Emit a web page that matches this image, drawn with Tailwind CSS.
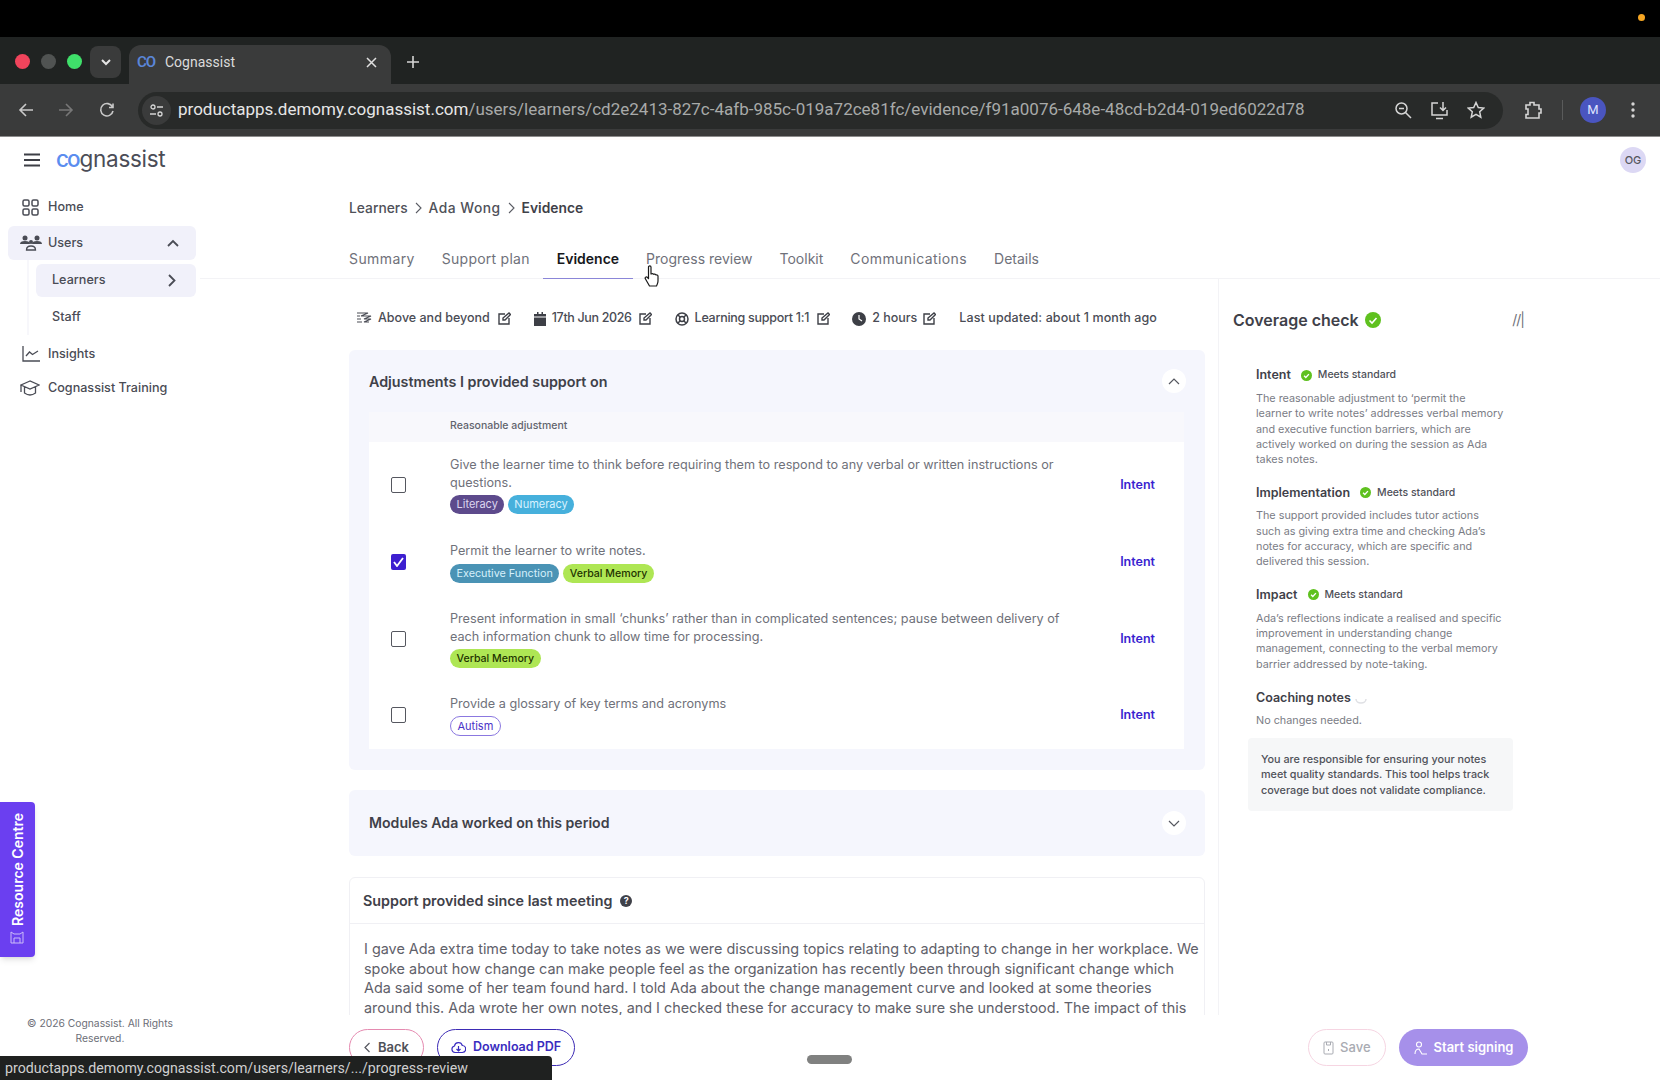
<!DOCTYPE html>
<html lang="en">
<head>
  <meta charset="UTF-8" />
  <title>Cognassist</title>
  <script src="https://cdn.jsdelivr.net/npm/@tailwindcss/browser@4"></script>
</head>
<body class="bg-white font-['Inter',sans-serif]">
<div class="relative w-[1660px] h-[1080px] overflow-hidden flex flex-col bg-white">

  <!-- mac menu bar -->
  <div class="h-[37px] bg-black flex items-center justify-end pr-[15px] pb-[2px] shrink-0">
    <span class="w-[7px] h-[7px] rounded-full bg-[#f5a623]"></span>
  </div>

  <!-- chrome tab strip -->
  <div class="h-[47px] bg-[#202322] flex items-end shrink-0 font-['Roboto',sans-serif]">
    <div class="flex items-center self-center gap-[11px] pl-[15px] mt-[1px]">
      <span class="w-[15px] h-[15px] rounded-full bg-[#f0445c]"></span>
      <span class="w-[15px] h-[15px] rounded-full bg-[#505352]"></span>
      <span class="w-[15px] h-[15px] rounded-full bg-[#3fe06a]"></span>
    </div>
    <div class="ml-[8px] mb-[6px] w-[31px] h-[32px] rounded-lg bg-[#3a3b3b] flex items-center justify-center">
      <svg class="w-[12px] h-[12px]" viewBox="0 0 12 12" fill="none" stroke="#e5e5e5" stroke-width="2"><path d="M2 4l4 4 4-4"/></svg>
    </div>
    <div class="ml-[8px] w-[262px] h-[39px] bg-[#3a3b3b] rounded-t-xl flex items-center pl-[8px] pr-[14px] pb-[5px]">
      <span class="text-[#5b86d8] font-semibold text-[15px] tracking-[-1px] w-[28px]">CO</span>
      <span class="text-[#dcdcdc] text-[14px]">Cognassist</span>
      <svg class="ml-auto w-[11px] h-[11px]" viewBox="0 0 11 11" fill="none" stroke="#e0e0e0" stroke-width="1.5"><path d="M1 1l9 9M10 1l-9 9"/></svg>
    </div>
    <svg class="ml-[15px] mb-[15px] w-[14px] h-[14px]" viewBox="0 0 14 14" fill="none" stroke="#d5d5d5" stroke-width="1.6"><path d="M7 1v12M1 7h12"/></svg>
  </div>

  <!-- chrome toolbar -->
  <div class="h-[53px] bg-[#3a3b3b] border-b border-[#8c8c8c] flex items-center shrink-0 font-['Roboto',sans-serif]">
    <svg class="ml-[18px] w-[16px] h-[16px]" viewBox="0 0 16 16" fill="none" stroke="#c9c9c9" stroke-width="1.6"><path d="M15 8H2M8 2L2 8l6 6"/></svg>
    <svg class="ml-[24px] w-[16px] h-[16px]" viewBox="0 0 16 16" fill="none" stroke="#777" stroke-width="1.6"><path d="M1 8h13M8 2l6 6-6 6"/></svg>
    <svg class="ml-[25px] w-[16px] h-[16px]" viewBox="0 0 16 16" fill="none" stroke="#c9c9c9" stroke-width="1.6"><path d="M13.5 5A6.2 6.2 0 1 0 14 9M14 1.5V5.5H10"/></svg>
    <div class="ml-[23px] w-[1365px] h-[37px] rounded-full bg-[#282a29] flex items-center pl-[4px] pr-[18px]">
      <span class="w-[29px] h-[29px] rounded-full bg-[#3a3b3b] flex items-center justify-center shrink-0">
        <svg class="w-[15px] h-[15px]" viewBox="0 0 15 15" fill="none" stroke="#d5d5d5" stroke-width="1.3"><circle cx="4" cy="4" r="2"/><path d="M8 4h6M1 11h6"/><circle cx="11" cy="11" r="2"/></svg>
      </span>
      <span class="ml-[7px] text-[17px] text-[#a8aaa9] whitespace-nowrap"><span class="text-[#e6e6e6]">productapps.demomy.cognassist.com</span>/users/learners/cd2e2413-827c-4afb-985c-019a72ce81fc/evidence/f91a0076-648e-48cd-b2d4-019ed6022d78</span>
      <svg class="ml-auto w-[18px] h-[18px]" viewBox="0 0 18 18" fill="none" stroke="#d5d5d5" stroke-width="1.5"><circle cx="7.5" cy="7.5" r="5.5"/><path d="M5 7.5h5M11.5 11.5L17 17"/></svg>
      <svg class="ml-[18px] w-[19px] h-[19px]" viewBox="0 0 19 19" fill="none" stroke="#d5d5d5" stroke-width="1.5"><path d="M8 2H2v12h15V9M6 17.5h7M13 1v8M10 6.5l3 3 3-3"/></svg>
      <svg class="ml-[18px] w-[18px] h-[18px]" viewBox="0 0 18 18" fill="none" stroke="#d5d5d5" stroke-width="1.5"><path d="M9 1.5l2.3 5 5.4.6-4 3.7 1.1 5.4L9 13.4l-4.8 2.8 1.1-5.4-4-3.7 5.4-.6z"/></svg>
    </div>
    <svg class="ml-[20px] w-[20px] h-[20px]" viewBox="0 0 20 20" fill="none" stroke="#d5d5d5" stroke-width="1.6"><path d="M3 5h4V2.5h4V5h5v4h2v4h-2v5H3v-3.500h2V9H3z"/></svg>
    <span class="ml-[19px] w-px h-[20px] bg-[#5a5b5b]"></span>
    <span class="ml-[17px] w-[26px] h-[26px] rounded-full bg-[#4a55c0] text-[#dfe2ff] text-[13px] flex items-center justify-center">M</span>
    <svg class="ml-[25px] w-[4px] h-[16px]" viewBox="0 0 4 16" fill="#d5d5d5"><circle cx="2" cy="2" r="1.700"/><circle cx="2" cy="8" r="1.700"/><circle cx="2" cy="14" r="1.700"/></svg>
  </div>

  <!-- app -->
  <div class="flex-1 flex min-h-0">

    <!-- sidebar -->
    <aside class="w-[200px] shrink-0 flex flex-col text-[#4a4c55] text-[12.600px] font-medium">
      <div class="h-[46px] flex items-center pl-[24px]">
        <svg class="w-[16px] h-[14px]" viewBox="0 0 16 14" fill="none" stroke="#3d3f46" stroke-width="2"><path d="M0 1.500h16M0 7h16M0 12.500h16"/></svg>
        <span class="ml-[16px] text-[22.500px] leading-none font-normal tracking-[-0.3px] text-[#4b4d57] -mt-[1px]"><span class="text-[#5b8def] font-medium tracking-[-2px] mr-[1px]">co</span>gnassist</span>
      </div>
      <div class="h-[43px] flex items-center pl-[22px] pt-[5px] gap-[9px]">
        <svg class="w-[17px] h-[17px]" viewBox="0 0 17 17" fill="none" stroke="#4a4c55" stroke-width="1.500"><rect x="1" y="1" width="6" height="6" rx="1.500"/><rect x="10" y="1" width="6" height="6" rx="1.500"/><rect x="1" y="10" width="6" height="6" rx="1.500"/><rect x="10" y="10" width="6" height="6" rx="1.500"/></svg>
        Home
      </div>
      <div class="ml-[8px] w-[188px] h-[34px] rounded-md bg-[#f1f1fa] flex items-center pl-[12px] pr-[17px] gap-[6px]">
        <svg class="w-[22px] h-[16px]" viewBox="0 0 22 16" fill="#4a4c55"><circle cx="5" cy="3" r="2.500"/><circle cx="17" cy="3" r="2.500"/><path d="M0 9q0-3 5-3t5 3zM12 9q0-3 5-3t5 3z"/><circle cx="11" cy="7" r="2"/><path d="M6.500 15q0-4 4.500-4t4.500 4z" fill="none" stroke="#4a4c55" stroke-width="1.300"/></svg>
        Users
        <svg class="ml-auto w-[12px] h-[8px]" viewBox="0 0 12 8" fill="none" stroke="#4a4c55" stroke-width="1.800"><path d="M1 7l5-5 5 5"/></svg>
      </div>
      <div class="ml-[27px] border-l-2 border-[#f7f7fb]">
        <div class="ml-[7px] mt-[4px] w-[160px] h-[33px] rounded-md bg-[#f1f1fa] flex items-center pl-[16px] pr-[20px]">
          Learners
          <svg class="ml-auto w-[8px] h-[13px]" viewBox="0 0 8 13" fill="none" stroke="#4a4c55" stroke-width="1.800"><path d="M1 1l5.500 5.500L1 12"/></svg>
        </div>
        <div class="ml-[23px] h-[38px] pt-[3px] flex items-center">Staff</div>
      </div>
      <div class="h-[37px] flex items-center pl-[22px] pt-[1px] gap-[8px]">
        <svg class="w-[18px] h-[16px]" viewBox="0 0 18 16" fill="none" stroke="#4a4c55" stroke-width="1.300"><path d="M1 0v15h17M4 10l3.500-4 3 2.500L16 5"/></svg>
        Insights
      </div>
      <div class="h-[33px] flex items-center pl-[20px] gap-[8px]">
        <svg class="w-[20px] h-[17px]" viewBox="0 0 20 17" fill="none" stroke="#4a4c55" stroke-width="1.300"><path d="M10 1L1 5l9 4 9-4zM4.500 7v6q5.500 4 11 0V7M1 5v7"/></svg>
        Cognassist Training
      </div>
      <div class="mt-auto mb-[34px] text-[10.300px] leading-[15px] font-normal text-[#6c6e77] text-center px-[20px]">© 2026 Cognassist. All Rights Reserved.</div>
    </aside>

    <!-- main -->
    <main class="flex-1 min-w-0 flex flex-col relative">
      <div class="pl-[149px] pt-[61px] flex items-center gap-[7px] text-[13.800px] font-medium text-[#4f5159] leading-[20px]">
        Learners
        <svg class="w-[7px] h-[12px]" viewBox="0 0 7 12" fill="none" stroke="#5a5c64" stroke-width="1.100"><path d="M1 1l5 5-5 5"/></svg>
        <span class="tracking-[0.500px]">Ada Wong</span>
        <svg class="w-[7px] h-[12px]" viewBox="0 0 7 12" fill="none" stroke="#5a5c64" stroke-width="1.100"><path d="M1 1l5 5-5 5"/></svg>
        <span class="font-semibold text-[#3f4149]">Evidence</span>
      </div>

      <div class="mt-[21px] pl-[135.500px] flex text-[14px] text-[#6f717a] border-b border-[#f3f3f6] h-[40px]">
        <span class="px-[13.500px] pt-[9px] tracking-[0.400px]">Summary</span>
        <span class="px-[13.500px] pt-[9px] tracking-[0.250px]">Support plan</span>
        <span class="px-[13.500px] pt-[9px] h-[40px] font-semibold text-[#17181c] border-b-[1.500px] border-[#8b86d8]">Evidence</span>
        <span class="px-[13.500px] pt-[9px]">Progress review</span>
        <span class="px-[13.500px] pt-[9px]">Toolkit</span>
        <span class="px-[13.500px] pt-[9px] tracking-[0.400px]">Communications</span>
        <span class="px-[13.500px] pt-[9px]">Details</span>
      </div>

      <div class="flex-1 min-h-0 flex">
        <!-- left column -->
        <div class="w-[1019px] shrink-0 overflow-hidden pl-[149px] pr-[13px] border-r border-[#f3f3f6]">
          <div class="h-[71px] flex items-center text-[12.500px] font-medium text-[#4a4c55] pl-[7px] pt-[8px]">
            <svg class="w-[16px] h-[15px]" viewBox="0 0 16 15" fill="none" stroke="#4a4c55" stroke-width="1.200"><path d="M1 2h11l-7 3h10L8 8h7l-7 3h5M1 5h3M1 8h4M1 11h5"/></svg>
            <span class="ml-[6px]">Above and beyond</span>
            <svg class="ml-[8px] w-[13px] h-[13px]" viewBox="0 0 13 13" fill="none" stroke="#3d3f46" stroke-width="1.400"><path d="M7 2H1v10h10V6M5 8V6l6-5 1.500 1.500L7 8z"/></svg>
            <svg class="ml-[23px] w-[12px] h-[14px]" viewBox="0 0 12 14" fill="#3d3f46"><path d="M3 0h1.500v2h3V0H9v2h3v2.500H0V2h3zM0 5.500h12V14H0z"/></svg>
            <span class="ml-[6px] tracking-[-0.350px]">17th Jun 2026</span>
            <svg class="ml-[7px] w-[13px] h-[13px]" viewBox="0 0 13 13" fill="none" stroke="#3d3f46" stroke-width="1.400"><path d="M7 2H1v10h10V6M5 8V6l6-5 1.500 1.500L7 8z"/></svg>
            <svg class="ml-[23px] w-[14px] h-[14px]" viewBox="0 0 14 14" fill="none" stroke="#3d3f46" stroke-width="1.500"><circle cx="7" cy="7" r="6"/><circle cx="7" cy="7" r="2.500"/><path d="M3 3l2 2M11 3L9 5M3 11l2-2M11 11L9 9"/></svg>
            <span class="ml-[6px] tracking-[-0.270px]">Learning support 1:1</span>
            <svg class="ml-[8px] w-[13px] h-[13px]" viewBox="0 0 13 13" fill="none" stroke="#3d3f46" stroke-width="1.400"><path d="M7 2H1v10h10V6M5 8V6l6-5 1.500 1.500L7 8z"/></svg>
            <svg class="ml-[22px] w-[14px] h-[14px]" viewBox="0 0 14 14"><circle cx="7" cy="7" r="7" fill="#3d3f46"/><path d="M7 3v4l3 2" fill="none" stroke="#fff" stroke-width="1.200"/></svg>
            <span class="ml-[6px]">2 hours</span>
            <svg class="ml-[6px] w-[13px] h-[13px]" viewBox="0 0 13 13" fill="none" stroke="#3d3f46" stroke-width="1.400"><path d="M7 2H1v10h10V6M5 8V6l6-5 1.500 1.500L7 8z"/></svg>
            <span class="ml-[23px] tracking-[0.100px]">Last updated: about 1 month ago</span>
          </div>

          <!-- adjustments panel -->
          <section class="bg-[#f5f6fd] rounded-md h-[420px] pl-[20px] pr-[21px]">
            <div class="h-[62px] flex items-center justify-between text-[14.300px] font-semibold text-[#3f4149] pt-[2px]">
              Adjustments I provided support on
              <span class="w-[24px] h-[24px] rounded-full bg-white flex items-center justify-center -mr-[2px] -mt-[2px]">
                <svg class="w-[12px] h-[7px]" viewBox="0 0 12 7" fill="none" stroke="#55575f" stroke-width="1.200"><path d="M1 6l5-5 5 5"/></svg>
              </span>
            </div>
            <div class="h-[30px] bg-[#f8f8fc] flex items-center pl-[81px] pb-[2px] text-[10.500px] font-medium text-[#62646d]">Reasonable adjustment</div>
            <div class="bg-white">
              <div class="h-[85px] flex items-center pl-[22px] pr-[29px]">
                <span class="w-[15px] h-[16px] rounded-[2px] border-[1.500px] border-[#55575f] shrink-0"></span>
                <div class="ml-[44px] w-[630px] text-[12.650px] leading-[18px] text-[#6f717a]">
                  <p class="whitespace-nowrap">Give the learner time to think before requiring them to respond to any verbal or written instructions or<br>questions.</p>
                  <div class="flex gap-[4px] mt-[3px]">
                    <span class="h-[19px] px-[6.500px] rounded-full bg-[#5d4a8c] text-[#dcd6f0] text-[11px] leading-[19px]">Literacy</span>
                    <span class="h-[19px] px-[6px] rounded-full bg-[#46b0dc] text-[#d9f2ff] text-[11px] leading-[19px]">Numeracy</span>
                  </div>
                </div>
                <span class="ml-auto mt-[2px] text-[12.500px] font-semibold text-[#3a1fd0]">Intent</span>
              </div>
              <div class="h-[70px] flex items-center pl-[22px] pr-[29px]">
                <span class="w-[15px] h-[16px] rounded-[2px] bg-[#3d1fd0] shrink-0 flex items-center justify-center">
                  <svg class="w-[11px] h-[10px]" viewBox="0 0 11 10" fill="none" stroke="#fff" stroke-width="1.800"><path d="M1 5l3 4 6-8"/></svg>
                </span>
                <div class="ml-[44px] text-[12.650px] leading-[18px] text-[#6f717a]">
                  <p>Permit the learner to write notes.</p>
                  <div class="flex gap-[4px] mt-[4px]">
                    <span class="h-[19px] px-[6.500px] rounded-full bg-[#4a93b5] text-[#d6f0fb] text-[10.800px] leading-[19px]">Executive Function</span>
                    <span class="h-[19px] px-[6.500px] rounded-full bg-[#aee654] text-[#1f3300] font-medium text-[10.600px] leading-[19px]">Verbal Memory</span>
                  </div>
                </div>
                <span class="ml-auto text-[12.500px] font-semibold text-[#3a1fd0]">Intent</span>
              </div>
              <div class="h-[84px] flex items-center pl-[22px] pr-[29px]">
                <span class="w-[15px] h-[16px] rounded-[2px] border-[1.500px] border-[#55575f] shrink-0"></span>
                <div class="ml-[44px] text-[12.650px] leading-[18px] text-[#6f717a]">
                  <p class="whitespace-nowrap">Present information in small ‘chunks’ rather than in complicated sentences; pause between delivery of<br>each information chunk to allow time for processing.</p>
                  <div class="flex gap-[4px] mt-[3px]">
                    <span class="h-[19px] px-[6.500px] rounded-full bg-[#aee654] text-[#1f3300] font-medium text-[10.600px] leading-[19px]">Verbal Memory</span>
                  </div>
                </div>
                <span class="ml-auto text-[12.500px] font-semibold text-[#3a1fd0]">Intent</span>
              </div>
              <div class="h-[68px] flex items-center pl-[22px] pr-[29px]">
                <span class="w-[15px] h-[16px] rounded-[2px] border-[1.500px] border-[#55575f] shrink-0"></span>
                <div class="ml-[44px] text-[12.650px] leading-[18px] text-[#6f717a]">
                  <p>Provide a glossary of key terms and acronyms</p>
                  <div class="flex gap-[4px] mt-[3px]">
                    <span class="h-[20px] px-[6.500px] rounded-full border border-[#8b78e0] bg-white text-[#4a32c8] text-[11px] leading-[18px]">Autism</span>
                  </div>
                </div>
                <span class="ml-auto text-[12.500px] font-semibold text-[#3a1fd0]">Intent</span>
              </div>
            </div>
          </section>

          <!-- modules panel -->
          <section class="mt-[20px] h-[66px] bg-[#f5f6fd] rounded-md pl-[20px] pr-[21px] flex items-center justify-between text-[14.100px] font-semibold text-[#3f4149]">
            Modules Ada worked on this period
            <span class="w-[24px] h-[24px] rounded-full bg-white flex items-center justify-center -mr-[2px]">
              <svg class="w-[12px] h-[7px]" viewBox="0 0 12 7" fill="none" stroke="#55575f" stroke-width="1.200"><path d="M1 1l5 5 5-5"/></svg>
            </span>
          </section>

          <!-- support card -->
          <section class="mt-[21px] border border-[#f0f0f4] rounded-t-md">
            <div class="h-[46px] flex items-center px-[13px] gap-[8px] border-b border-[#f0f0f4] text-[14.300px] font-semibold text-[#3f4149]">
              Support provided since last meeting
              <span class="w-[12px] h-[12px] rounded-full bg-[#3f4149] text-white text-[9px] font-bold flex items-center justify-center">?</span>
            </div>
            <p class="pl-[14px] pt-[15px] pb-[20px] text-[14.400px] leading-[19.500px] text-[#5f616a] whitespace-nowrap">I gave Ada extra time today to take notes as we were discussing topics relating to adapting to change in her workplace. We<br>spoke about how change can make people feel as the organization has recently been through significant change which<br>Ada said some of her team found hard. I told Ada about the change management curve and looked at some theories<br>around this. Ada wrote her own notes, and I checked these for accuracy to make sure she understood. The impact of this</p>
          </section>
        </div>

        <!-- coverage check -->
        <div class="flex-1 min-w-0 pl-[14px] pt-[1px]">
          <div class="w-[291px] h-[71px] flex items-center pt-[8px] text-[16px] font-semibold text-[#3f4149]">
            Coverage check
            <svg class="ml-[6px] w-[16px] h-[16px]" viewBox="0 0 16 16"><circle cx="8" cy="8" r="8" fill="#5fc11f"/><path d="M4.500 8.500l2.500 2.500 4.500-5" fill="none" stroke="#fff" stroke-width="1.600"/></svg>
            <span class="ml-auto text-[#6f717a] font-normal text-[14px] tracking-[-1px]">//|</span>
          </div>
          <div class="w-[285px] mt-[14px] pl-[23px] text-[10.800px] leading-[15.300px] text-[#7a7c85]">
            <div class="flex items-center h-[20px] text-[#4f5159] text-[10.500px]">
              <span class="text-[12.500px] font-semibold text-[#3f4149]">Intent</span>
              <svg class="ml-[10px] w-[11px] h-[11px]" viewBox="0 0 16 16"><circle cx="8" cy="8" r="8" fill="#5fc11f"/><path d="M4.500 8.500l2.500 2.500 4.500-5" fill="none" stroke="#fff" stroke-width="2"/></svg>
              <span class="ml-[6px] font-medium">Meets standard</span>
            </div>
            <p class="mt-[6px] whitespace-nowrap">The reasonable adjustment to ‘permit the<br>learner to write notes’ addresses verbal memory<br>and executive function barriers, which are<br>actively worked on during the session as Ada<br>takes notes.</p>
            <div class="flex items-center h-[20px] mt-[15px] text-[#4f5159] text-[10.500px]">
              <span class="text-[12.500px] font-semibold text-[#3f4149]">Implementation</span>
              <svg class="ml-[10px] w-[11px] h-[11px]" viewBox="0 0 16 16"><circle cx="8" cy="8" r="8" fill="#5fc11f"/><path d="M4.500 8.500l2.500 2.500 4.500-5" fill="none" stroke="#fff" stroke-width="2"/></svg>
              <span class="ml-[6px] font-medium">Meets standard</span>
            </div>
            <p class="mt-[6px] whitespace-nowrap">The support provided includes tutor actions<br>such as giving extra time and checking Ada’s<br>notes for accuracy, which are specific and<br>delivered this session.</p>
            <div class="flex items-center h-[20px] mt-[15px] text-[#4f5159] text-[10.500px]">
              <span class="text-[12.500px] font-semibold text-[#3f4149]">Impact</span>
              <svg class="ml-[10px] w-[11px] h-[11px]" viewBox="0 0 16 16"><circle cx="8" cy="8" r="8" fill="#5fc11f"/><path d="M4.500 8.500l2.500 2.500 4.500-5" fill="none" stroke="#fff" stroke-width="2"/></svg>
              <span class="ml-[6px] font-medium">Meets standard</span>
            </div>
            <p class="mt-[6px] whitespace-nowrap">Ada’s reflections indicate a realised and specific<br>improvement in understanding change<br>management, connecting to the verbal memory<br>barrier addressed by note-taking.</p>
            <div class="flex items-center h-[20px] mt-[16px]">
              <span class="text-[12.500px] font-semibold text-[#3f4149]">Coaching notes</span>
              <svg class="ml-[4px] w-[12px] h-[12px]" viewBox="0 0 12 12" fill="none" stroke="#dfe0e4" stroke-width="1.500"><path d="M1 7a5 4 0 0 0 10 0"/></svg>
            </div>
            <p class="mt-[5px]">No changes needed.</p>
            <div class="mt-[10px] -ml-[8px] w-[265px] h-[73px] bg-[#f6f7f8] rounded-sm pl-[13px] pt-[14px] text-[#4f5159] font-medium whitespace-nowrap">You are responsible for ensuring your notes<br>meet quality standards. This tool helps track<br>coverage but does not validate compliance.</div>
          </div>
        </div>
      </div>

      <!-- footer actions -->
      <div class="h-[65px] shrink-0 flex items-start pt-[14px] pl-[149px] text-[13px] font-semibold">
        <span class="h-[37px] px-[14px] rounded-full border-[1.500px] border-[#e58ab0] flex items-center gap-[8px] text-[#4f5159]">
          <svg class="w-[6px] h-[11px]" viewBox="0 0 6 11" fill="none" stroke="#55575f" stroke-width="1.200"><path d="M5.500 1L1 5.500l4.500 4.500"/></svg>
          Back
        </span>
        <span class="ml-[13px] h-[37px] pl-[13px] pr-[13px] rounded-full border-[1.500px] border-[#3d2bb5] flex items-center gap-[7px] text-[#3a2cc0] text-[12.500px]">
          <svg class="w-[15px] h-[13px]" viewBox="0 0 15 13" fill="none" stroke="#3a2cc0" stroke-width="1.200"><path d="M4 11.500a3.300 3.300 0 0 1-.5-6.500 4 4 0 0 1 7.800-.5 3.500 3.500 0 0 1-.3 7zM7.500 5v5M5.500 8l2 2 2-2"/></svg>
          Download PDF
        </span>
        <span class="ml-auto h-[37px] px-[14.500px] rounded-full border-[1.500px] border-[#f6d5e2] flex items-center gap-[6px] text-[#a9abb2] font-medium">
          <svg class="w-[11px] h-[14px]" viewBox="0 0 11 14" fill="none" stroke="#a9abb2" stroke-width="1"><rect x="1" y="1" width="9" height="12" rx="1"/><path d="M3.500 1v3h4V1M5.500 8v2"/></svg>
          Save
        </span>
        <span class="ml-[13px] mr-[132px] h-[37px] px-[14.500px] rounded-full bg-[#a690ea] flex items-center gap-[6px] text-white">
          <svg class="w-[14px] h-[14px]" viewBox="0 0 14 14" fill="none" stroke="#fff" stroke-width="1.100"><circle cx="5" cy="3.500" r="2.500"/><path d="M1 13q0-5 4-5l3 5h5"/></svg>
          Start signing
        </span>
      </div>

      <!-- mouse pointer over the tabs -->
      <svg class="absolute left-[444px] top-[128px] w-[16px] h-[23px]" viewBox="0 0 16 23"><path d="M4.500 2c0-1.500 2.500-1.500 2.500 0v7c1-.6 2-.5 2.500.3.800-.5 2-.2 2.300.6.900-.3 2 .1 2.200 1.100v5c0 2-.8 3-1.500 5H5.500L1.500 14c-1-1.700.8-2.800 2-1.500l1 1.200z" fill="#fff" stroke="#1a1a1a" stroke-width="1.200" stroke-linejoin="round"/></svg>
    </main>
  </div>

  <!-- avatar -->
  <span class="absolute left-[1620px] top-[147px] w-[26px] h-[26px] rounded-full bg-[#dcd8f4] text-[#55575f] text-[11px] font-medium flex items-center justify-center">OG</span>

  <!-- resource centre tab -->
  <div class="absolute left-0 top-[802px] w-[35px] h-[155px] bg-[#6b3ff0] rounded-r-sm shadow-md flex flex-col items-center justify-end pb-[31px]">
    <span class="[writing-mode:vertical-rl] rotate-180 text-white text-[14px] font-semibold">Resource Centre</span>
  </div>
  <svg class="absolute left-[10px] top-[931px] w-[14px] h-[13px]" viewBox="0 0 14 13" fill="none" stroke="#cbbcf8" stroke-width="1"><path d="M1 1l3 2h6l3-2v11H1zM4 12V7h6v5"/></svg>

  <!-- chrome status bubble -->
  <div class="absolute left-0 bottom-0 w-[552px] h-[24px] bg-[#1f2120] rounded-tr-sm flex items-center pl-[5px] pt-[1px] font-['Roboto',sans-serif] text-[14.200px] text-[#d0d0d0]">productapps.demomy.cognassist.com/users/learners/.../progress-review</div>

  <!-- window handle -->
  <span class="absolute left-[807px] top-[1055px] w-[45px] h-[9px] rounded-full bg-[#808180]"></span>
</div>
</body>
</html>
